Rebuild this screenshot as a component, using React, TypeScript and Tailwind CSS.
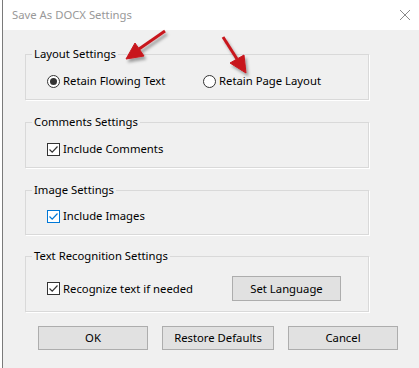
import React from "react";

function Radio({ checked, label }: { checked?: boolean; label: string }) {
  return (
    <div className="flex items-center">
      <span className="flex h-[13px] w-[13px] items-center justify-center rounded-full border border-[#333] bg-white">
        {checked && <span className="h-[7px] w-[7px] rounded-full bg-[#333]" />}
      </span>
      <span className="ml-[3px]">{label}</span>
    </div>
  );
}

function Checkbox({ label, blue }: { label: string; blue?: boolean }) {
  const color = blue ? "#0078d7" : "#333333";
  return (
    <div className="flex items-center">
      <span
        className={
          blue
            ? "flex h-[13px] w-[13px] items-center justify-center border border-[#0078d7] bg-white"
            : "flex h-[13px] w-[13px] items-center justify-center border border-[#333] bg-white"
        }
      >
        <svg width="11" height="11" viewBox="0 0 11 11">
          <path d="M1.5 5.5 L4.2 8.2 L9.5 2.5" fill="none" stroke={color} strokeWidth="1.2" />
        </svg>
      </span>
      <span className="ml-[3px]">{label}</span>
    </div>
  );
}

function Group({ title, className, children }: { title: string; className?: string; children: React.ReactNode }) {
  return (
    <fieldset className={"w-[344px] border border-[#d9d9d9] pb-[10px] shadow-[1px_1px_0_#ffffff] " + (className ?? "")}>
      <legend className="ml-[6px] px-[2px] leading-[16px]">{title}</legend>
      <div className="pl-[21px]">{children}</div>
    </fieldset>
  );
}

function Button({ children, className }: { children: React.ReactNode; className?: string }) {
  return (
    <div className={"flex h-[24px] items-center justify-center border border-[#adadad] bg-[#e1e1e1] " + (className ?? "")}>
      {children}
    </div>
  );
}

export default function App() {
  return (
    <div className="flex h-[368px] w-[419px] overflow-hidden bg-white font-['Segoe_UI','Noto_Sans',sans-serif] text-[11.3px] text-black">
      <div className="w-[2px] bg-white" />
      <div className="w-px bg-[#7a7a7a]" />
      <div className="relative flex flex-1 flex-col">
        {/* Title bar */}
        <div className="flex h-[30px] items-center justify-between bg-white pl-[9px] pr-[8px]">
          <span className="text-[#999]">Save As DOCX Settings</span>
          <svg width="12" height="12" viewBox="0 0 12 12">
            <path d="M1 1 L11 11 M11 1 L1 11" stroke="#8a8a8a" strokeWidth="1" />
          </svg>
        </div>

        {/* Body */}
        <div className="flex flex-1 flex-col bg-[#f0f0f0] pl-[22px] pt-[16px]">
          <Group title="Layout Settings">
            <div className="mt-[11px] flex leading-[16px]">
              <div className="w-[156px]">
                <Radio checked label="Retain Flowing Text" />
              </div>
              <Radio label="Retain Page Layout" />
            </div>
          </Group>

          <Group title="Comments Settings" className="mt-[14px]">
            <div className="mt-[11px] leading-[16px]">
              <Checkbox label="Include Comments" />
            </div>
          </Group>

          <Group title="Image Settings" className="mt-[14px]">
            <div className="mt-[10px] leading-[16px]">
              <Checkbox blue label="Include Images" />
            </div>
          </Group>

          <Group title="Text Recognition Settings" className="mt-[13px]">
            <div className="mt-[12px] flex items-center justify-between pr-[27px] leading-[16px]">
              <Checkbox label="Recognize text if needed" />
              <Button className="h-[25px] w-[109px]">Set Language</Button>
            </div>
          </Group>

          <div className="mt-[14px] flex gap-[14px] pl-[13px]">
            <Button className="w-[110px]">OK</Button>
            <Button className="w-[112px]">Restore Defaults</Button>
            <Button className="w-[110px]">Cancel</Button>
          </div>
        </div>

        {/* Red annotation arrows */}
        <svg className="pointer-events-none absolute left-[-3px] top-0" width="419" height="368">
          <defs>
            <filter id="sh" x="-20%" y="-20%" width="140%" height="140%">
              <feDropShadow dx="2" dy="3" stdDeviation="1.5" floodColor="#000" floodOpacity="0.35" />
            </filter>
          </defs>
          <g filter="url(#sh)" fill="#c8161d" stroke="#c8161d">
            <line x1="165" y1="31" x2="139" y2="49" strokeWidth="3" />
            <polygon points="126,59 144,56 135,43" strokeWidth="1" />
            <line x1="223" y1="37" x2="237" y2="59" strokeWidth="3" />
            <polygon points="246,73 230,63 244,55" strokeWidth="1" />
          </g>
        </svg>
      </div>
    </div>
  );
}
